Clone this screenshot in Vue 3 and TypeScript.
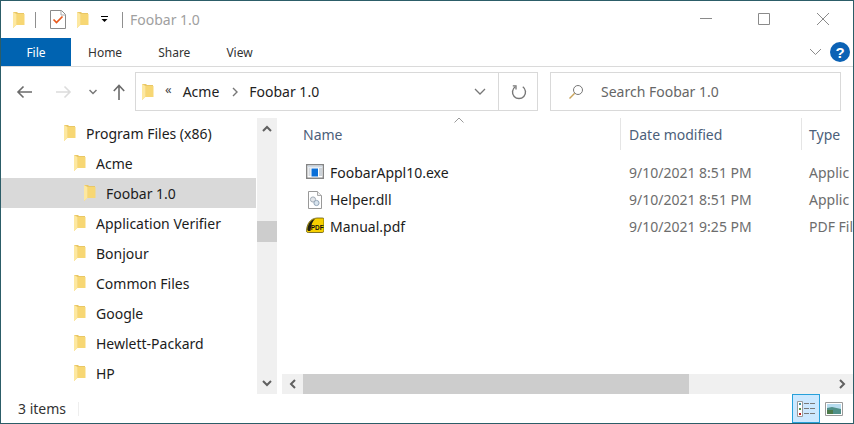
<script setup lang="ts">
const tabs = ['Home', 'Share', 'View']
const tree = [
  { name: 'Program Files (x86)', level: 0 },
  { name: 'Acme', level: 1 },
  { name: 'Foobar 1.0', level: 2, selected: true },
  { name: 'Application Verifier', level: 1 },
  { name: 'Bonjour', level: 1 },
  { name: 'Common Files', level: 1 },
  { name: 'Google', level: 1 },
  { name: 'Hewlett-Packard', level: 1 },
  { name: 'HP', level: 1 },
]
const files = [
  { name: 'FoobarAppl10.exe', date: '9/10/2021 8:51 PM', type: 'Applic', kind: 'exe' },
  { name: 'Helper.dll', date: '9/10/2021 8:51 PM', type: 'Applic', kind: 'dll' },
  { name: 'Manual.pdf', date: '9/10/2021 9:25 PM', type: 'PDF Fil', kind: 'pdf' },
]
function indent(level: number) {
  return { paddingLeft: `${62 + level * 10}px` }
}
</script>

<template>
  <div class="win">
    <header class="title">
      <svg class="folder" viewBox="0 0 13 18"><path d="M1 1h4l1 1h6v12H4l-3 3z" fill="#e9c766"/><path d="M4.500 3H12.500v11H4.500z" fill="#f7d774"/><path d="M1 1l3.500 2v11L1 17z" fill="#fde8a0"/></svg>
      <span class="qsep"></span>
      <svg class="check" viewBox="0 0 16 19"><path d="M.5.5h11l4 4v14H.5z" fill="#fff" stroke="#8a8a8a"/><path d="M11 .5v4.500h4.500" fill="none" stroke="#aaa"/><path d="M3.500 9.500l3 3 6-6" fill="none" stroke="#e8591c" stroke-width="1.700"/></svg>
      <svg class="folder second" viewBox="0 0 13 18"><path d="M1 1h4l1 1h6v12H4l-3 3z" fill="#e9c766"/><path d="M4.500 3H12.500v11H4.500z" fill="#f7d774"/><path d="M1 1l3.500 2v11L1 17z" fill="#fde8a0"/></svg>
      <svg class="qdrop" viewBox="0 0 7 7"><path d="M0 .5h7" stroke="#000"/><path d="M.5 3h6L3.500 6z" fill="#000"/></svg>
      <span class="qsep last"></span>
      <span class="title-text">Foobar 1.0</span>
      <div class="caption">
        <svg class="cap" viewBox="0 0 58 37"><path d="M22 17.500h12" stroke="#8a8a8a"/></svg>
        <svg class="cap" viewBox="0 0 58 37"><path d="M22.500 12.500h11v11h-11z" fill="none" stroke="#8a8a8a"/></svg>
        <svg class="cap" viewBox="0 0 58 37"><path d="M23 12l12 12M35 12L23 24" stroke="#8a8a8a"/></svg>
      </div>
    </header>

    <nav class="ribbon">
      <div class="file-tab">File</div>
      <div v-for="t in tabs" :key="t" class="tab">{{ t }}</div>
      <div class="ribbon-right">
        <svg class="rib-chev" viewBox="0 0 13 8"><path d="M1 1l5.500 5.500L12 1" fill="none" stroke="#8c8c8c"/></svg>
        <svg class="help" viewBox="0 0 20 20"><circle cx="10" cy="10" r="10" fill="#0b62b5"/><text x="10" y="15.500" text-anchor="middle" class="help-q">?</text></svg>
      </div>
    </nav>

    <div class="addr-row">
      <div class="nav-btns">
        <svg class="arrow back" viewBox="0 0 16 14"><path d="M16 7H2M7.500 1.500L2 7l5.500 5.500" fill="none" stroke="#6b6b6b" stroke-width="1.600"/></svg>
        <svg class="arrow fwd" viewBox="0 0 16 14"><path d="M0 7h14M8.500 1.500L14 7l-5.500 5.500" fill="none" stroke="#dcdcdc" stroke-width="1.600"/></svg>
        <svg class="recent" viewBox="0 0 8 6"><path d="M.5 1L4 4.500 7.500 1" fill="none" stroke="#777" stroke-width="1.500"/></svg>
        <svg class="arrow up" viewBox="0 0 12 16"><path d="M6 16V2M.8 7L6 1.500 11.200 7" fill="none" stroke="#6b6b6b" stroke-width="1.600"/></svg>
      </div>
      <div class="addr">
        <svg class="folder addr-folder" viewBox="0 0 13 18"><path d="M1 1h4l1 1h6v12H4l-3 3z" fill="#e9c766"/><path d="M4.500 3H12.500v11H4.500z" fill="#f7d774"/><path d="M1 1l3.500 2v11L1 17z" fill="#fde8a0"/></svg>
        <span class="crumb-more">«</span>
        <span class="crumb first">Acme</span>
        <svg class="crumb-sep" viewBox="0 0 6 10"><path d="M1 1l4 4-4 4" fill="none" stroke="#777" stroke-width="1.400"/></svg>
        <span class="crumb">Foobar 1.0</span>
        <svg class="addr-chev" viewBox="0 0 12 7"><path d="M1 1l5 5 5-5" fill="none" stroke="#777" stroke-width="1.300"/></svg>
        <div class="refresh">
          <svg viewBox="0 0 16 16" width="16" height="16"><path d="M4.200 2.800a6.500 6.500 0 1 0 7.600 0" fill="none" stroke="#777" stroke-width="1.400"/><path d="M1.800 1.800h3.200v3.600" fill="none" stroke="#777" stroke-width="1.300"/></svg>
        </div>
      </div>
      <div class="search">
        <svg class="search-ico" viewBox="0 0 16 16"><circle cx="10" cy="6" r="4.500" fill="none" stroke="#777"/><path d="M6.700 9.300L1.500 14.500" stroke="#c9a35a" stroke-width="1.400"/></svg>
        <span>Search Foobar 1.0</span>
      </div>
    </div>

    <main class="body">
      <aside class="tree">
        <ul class="tree-list">
          <li v-for="n in tree" :key="n.name" class="tree-row" :class="{ sel: n.selected }" :style="indent(n.level)">
            <svg class="folder" viewBox="0 0 13 18"><path d="M1 1h4l1 1h6v12H4l-3 3z" fill="#e9c766"/><path d="M4.500 3H12.500v11H4.500z" fill="#f7d774"/><path d="M1 1l3.500 2v11L1 17z" fill="#fde8a0"/></svg>
            <span>{{ n.name }}</span>
          </li>
        </ul>
        <div class="vbar">
          <svg class="sb-arrow" viewBox="0 0 10 7"><path d="M1 6l4-4 4 4" fill="none" stroke="#606060" stroke-width="2"/></svg>
          <div class="vtrack"><div class="vthumb"></div></div>
          <svg class="sb-arrow" viewBox="0 0 10 7"><path d="M1 1l4 4 4-4" fill="none" stroke="#606060" stroke-width="2"/></svg>
        </div>
      </aside>

      <section class="pane">
        <div class="list">
          <div class="head">
            <div class="hcol c-name">Name<svg class="sort" viewBox="0 0 10 6"><path d="M.5 5.500L5 1l4.500 4.500" fill="none" stroke="#9a9a9a"/></svg></div>
            <div class="hcol c-date">Date modified</div>
            <div class="hcol c-type">Type</div>
          </div>
          <div v-for="f in files" :key="f.name" class="frow">
            <div class="c-name fname">
              <svg v-if="f.kind === 'exe'" class="ficon up3" viewBox="0 0 18 18"><path d="M.7 2.700h16.600v13.600H.7z" fill="#fff" stroke="#858585" stroke-width="1.400"/><path d="M1.500 3.500h15v2h-15z" fill="#cfd8e2"/><path d="M2.500 7h2M2.500 9h2M2.500 11h2M2.500 13h2" stroke="#a8b2bd"/><path d="M5.500 6.500h6.500v8H5.500z" fill="#0a6fd8"/><path d="M13 7h3M13 9h3M13 11h3M13 13h3" stroke="#9aa6b2"/></svg>
              <svg v-else-if="f.kind === 'dll'" class="ficon" viewBox="0 0 18 18"><path d="M2.500.5h9l4 4v13h-13z" fill="#fff" stroke="#999"/><path d="M11.500.5v4h4" fill="#eee" stroke="#aaa"/><circle cx="7" cy="8.500" r="2.600" fill="#e2e5e9" stroke="#a3adb8"/><circle cx="10.500" cy="12" r="2.600" fill="#d8e4ee" stroke="#93a5b8"/></svg>
              <svg v-else class="ficon up4" viewBox="0 0 18 18"><path d="M.5 14.500C1 8 4 2.500 11 2h5.500c1 0 1.500.5 1.500 1.500V14.500c0 1.200-.5 2-1.800 2H2.500C1 16.500.3 16 .5 14.500z" fill="#f6cf00" stroke="#4a4200" stroke-width=".7"/><path d="M1.300 13.500C2 8 4.500 4 9 3 6.500 5 5 9 4.500 15H2z" fill="#1e1e10"/><text x="4.800" y="13.800" class="pdf-mark">PDF</text></svg>
              <span>{{ f.name }}</span>
            </div>
            <div class="c-date fmeta">{{ f.date }}</div>
            <div class="c-type fmeta">{{ f.type }}</div>
          </div>
        </div>
        <div class="hbar">
          <svg class="hb-arrow" viewBox="0 0 7 10"><path d="M6 1L2 5l4 4" fill="none" stroke="#606060" stroke-width="2"/></svg>
          <div class="htrack"><div class="hthumb"></div></div>
          <svg class="hb-arrow" viewBox="0 0 7 10"><path d="M1 1l4 4-4 4" fill="none" stroke="#606060" stroke-width="2"/></svg>
        </div>
      </section>
    </main>

    <footer class="status">
      <span class="count">3 items</span>
      <span class="status-sep"></span>
      <div class="views">
        <div class="view active">
          <svg viewBox="0 0 18 16" width="18" height="16"><path d="M.5.500h5v15h-5z" fill="#fff" stroke="#9a9a9a"/><path d="M2 2h2v2H2z" fill="#3f8f9f"/><path d="M2 7h2v2H2z" fill="#5a8f4a"/><path d="M2 12h2v2H2z" fill="#c02020"/><path d="M7 2.500h11M7 7.500h11M7 12.500h11" stroke="#7a7a7a" stroke-dasharray="5 1"/></svg>
        </div>
        <div class="view">
          <svg viewBox="0 0 18 14" width="18" height="14"><path d="M.5.500h17v13H.5z" fill="#fff" stroke="#9a9a9a"/><path d="M2 2h14v5H2z" fill="#b7dcef"/><path d="M2 6l5-1 9 2v5H2z" fill="#4f8f88"/><path d="M2 8h6v4H2z" fill="#4c7a4a"/></svg>
        </div>
      </div>
    </footer>
  </div>
</template>

<style>
html, body { margin: 0; padding: 0; background: #fff; }
</style>

<style scoped>
* { box-sizing: border-box; }
.win {
  width: 854px; height: 424px; display: flex; flex-direction: column; overflow: hidden;
  background: #fff; border: 1px solid #2c5d68;
  font-family: "Noto Sans", "Open Sans", sans-serif; font-size: 14px; color: #1c1c1c;
}
.folder { width: 13px; height: 18px; flex: none; display: block; }
.title { height: 37px; display: flex; align-items: center; padding-left: 11px; flex: none; }
.qsep { width: 1px; height: 16px; background: #8f8f8f; margin-left: 10px; }
.check { width: 16px; height: 19px; margin-left: 14px; }
.second { margin-left: 10px; }
.qdrop { width: 7px; height: 7px; margin-left: 12px; }
.qsep.last { margin-left: 14px; }
.title-text { margin-left: 7px; color: #a0a0a0; font-size: 14px; }
.caption { margin-left: auto; display: flex; padding-right: 1px; }
.cap { width: 58px; height: 37px; display: block; }
.ribbon { height: 29px; display: flex; align-items: stretch; border-bottom: 1px solid #dadada; flex: none; font-size: 12px; }
.file-tab { width: 70px; background: #0063b1; color: #fff; display: flex; align-items: center; justify-content: center; }
.tab { padding: 0 18px; display: flex; align-items: center; justify-content: center; color: #333; }
.file-tab + .tab { margin-left: -1px; }
.ribbon-right { margin-left: auto; display: flex; align-items: center; gap: 8px; padding-right: 3px; }
.rib-chev { width: 13px; height: 8px; }
.help { width: 20px; height: 20px; }
.help-q { font: bold 15px "Liberation Sans", sans-serif; fill: #fff; }
.addr-row { height: 49px; display: flex; align-items: center; flex: none; }
.nav-btns { width: 134px; height: 38px; display: flex; align-items: center; flex: none; }
.arrow.back { width: 16px; height: 14px; margin-left: 15px; }
.arrow.fwd { width: 16px; height: 14px; margin-left: 24px; }
.recent { width: 8px; height: 6px; margin-left: 17px; }
.arrow.up { width: 12px; height: 16px; margin-left: 16px; }
.addr { width: 403px; height: 39px; border: 1px solid #d9d9d9; display: flex; align-items: center; padding-left: 5px; font-size: 14px; flex: none; }
.crumb-more { margin-left: 11px; font-size: 13px; line-height: 1; color: #444; margin-top: -5px; }
.crumb { margin-left: 12px; color: #222; }
.crumb.first { margin-left: 11px; }
.crumb-sep { width: 6px; height: 10px; margin-left: 13px; }
.crumb-sep + .crumb { margin-left: 11px; }
.addr-chev { width: 12px; height: 7px; margin-left: auto; margin-right: 12px; }
.refresh { width: 39px; height: 37px; border-left: 1px solid #d9d9d9; padding-left: 1px; display: flex; align-items: center; justify-content: center; flex: none; }
.search { width: 291px; height: 39px; margin-left: 12px; border: 1px solid #d9d9d9; display: flex; align-items: center; padding-left: 17px; color: #666; font-size: 14px; flex: none; }
.search-ico { width: 16px; height: 16px; margin-right: 17px; }
.body { flex: 1; min-height: 0; display: flex; padding-top: 2px; }
.tree { width: 275px; display: flex; flex: none; height: 276px; }
.tree-list { list-style: none; margin: 0; padding: 0; width: 255px; flex: none; }
.tree-row { height: 30px; display: flex; align-items: center; gap: 10px; color: #1c1c1c; }
.tree-row.sel { background: #d9d9d9; }
.vbar { width: 20px; margin-left: 1px; background: #f0f0f0; display: flex; flex-direction: column; align-items: center; flex: none; }
.sb-arrow { width: 10px; height: 7px; margin: 7px 0; flex: none; }
.vtrack { flex: 1; width: 100%; padding-top: 82px; }
.vthumb { height: 21px; background: #cdcdcd; }
.pane { flex: 1; min-width: 0; display: flex; flex-direction: column; padding-left: 6px; height: 276px; }
.list { flex: 1; min-height: 0; overflow: hidden; }
.head { display: flex; height: 32px; }
.hcol { display: flex; align-items: center; color: #4c607a; position: relative; }
.c-name { width: 338px; padding-left: 21px; flex: none; }
.c-date { width: 181px; padding-left: 8px; flex: none; border-left: 1px solid #e5e5e5; }
.c-type { padding-left: 7px; flex: 1; border-left: 1px solid #e5e5e5; white-space: nowrap; overflow: hidden; }
.hcol.c-name { border: 0; }
.sort { position: absolute; left: 172px; top: -1px; width: 10px; height: 6px; }
.frow { display: flex; height: 27px; align-items: center; }
.head + .frow { margin-top: 9px; }
.frow .c-date, .frow .c-type { border-left-color: transparent; }
.fname { display: flex; align-items: center; gap: 6px; padding-left: 24px; color: #1c1c1c; }
.ficon { width: 18px; height: 18px; flex: none; }
.ficon.up3 { margin-top: -3px; }
.ficon.up4 { margin-top: -4px; }
.fmeta { color: #6d6d6d; }
.pdf-mark { font: bold 6.4px "Liberation Sans", sans-serif; fill: #111; }
.hbar { height: 20px; background: #f0f0f0; display: flex; align-items: center; flex: none; }
.hb-arrow { width: 7px; height: 10px; margin: 0 7px; flex: none; }
.htrack { flex: 1; height: 100%; }
.hthumb { width: 386px; height: 100%; background: #cdcdcd; }
.status { height: 29px; display: flex; align-items: center; flex: none; padding-left: 17px; font-size: 14px; color: #333; }
.count { width: 60px; }
.status-sep { width: 1px; height: 14px; background: #eee; }
.views { margin-left: auto; display: flex; height: 100%; align-items: stretch; padding-right: 5px; }
.view { width: 28px; display: flex; align-items: center; justify-content: center; }
.view.active { background: #cce8ff; border: 1px solid #26a0da; }
</style>
